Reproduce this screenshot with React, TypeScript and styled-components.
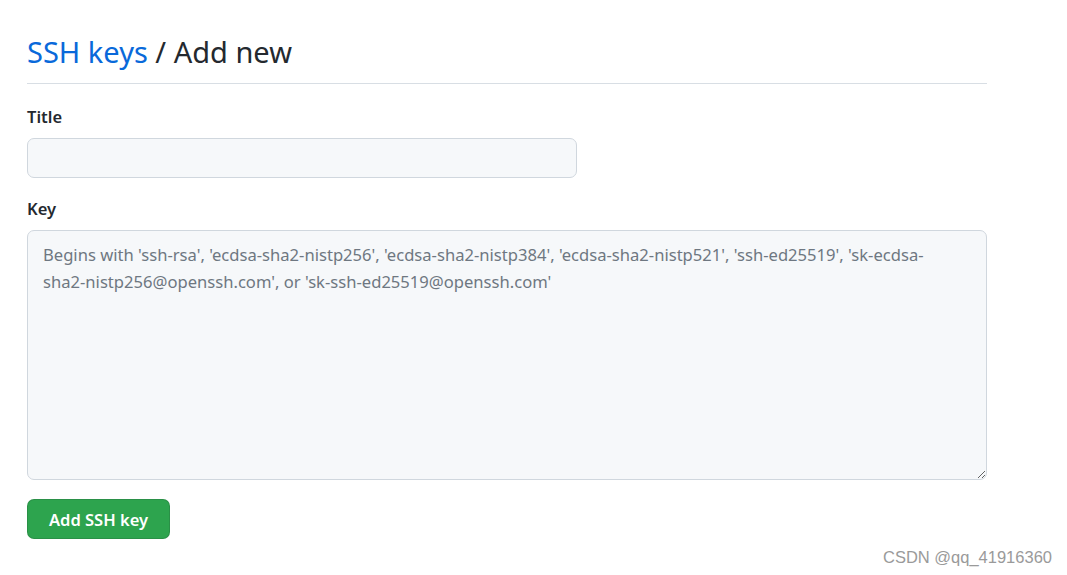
import React from "react";
import styled, { createGlobalStyle } from "styled-components";

const Global = createGlobalStyle`
  html, body { margin: 0; padding: 0; background: #ffffff; }
  body { font-family: "Noto Sans", "Open Sans", sans-serif; color: #24292f; }
`;

const Page = styled.div`
  position: relative;
  width: 1067px;
  height: 575px;
  box-sizing: border-box;
  padding: 32px 0 0 27px;
`;

const Main = styled.div`
  width: 960px;
  display: flex;
  flex-direction: column;
`;

const Header = styled.h2`
  margin: 0;
  padding-bottom: 11px;
  border-bottom: 1px solid #d8dee4;
  font-size: 29px;
  font-weight: 400;
  line-height: 40px;
  color: #24292f;
`;

const Crumb = styled.a`
  color: #0969da;
  text-decoration: none;
`;

const Field = styled.div<{ $top: number }>`
  display: flex;
  flex-direction: column;
  margin-top: ${(p) => p.$top}px;
`;

const Label = styled.label`
  font-size: 16.5px;
  font-weight: 600;
  line-height: 22px;
  margin-bottom: 10px;
`;

const TextInput = styled.input`
  width: 550px;
  height: 40px;
  box-sizing: border-box;
  background: #f6f8fa;
  border: 1px solid #d0d7de;
  border-radius: 7px;
  font-family: inherit;
  font-size: 17px;
  padding: 0 15px;
  outline: none;
`;

const TextArea = styled.textarea`
  width: 960px;
  height: 250px;
  box-sizing: border-box;
  background: #f6f8fa;
  border: 1px solid #d0d7de;
  border-radius: 7px;
  font-family: inherit;
  font-size: 16.6px;
  line-height: 27px;
  padding: 10px 26px 10px 15px;
  outline: none;
  resize: vertical;
  &::placeholder { color: #6e7781; }
`;

const Button = styled.button`
  align-self: flex-start;
  margin-top: 19px;
  height: 40px;
  padding: 0 21px 0 21px;
  background: #2da44e;
  border: 1px solid rgba(27, 31, 36, 0.15);
  border-radius: 7px;
  color: #ffffff;
  font-family: inherit;
  font-size: 16.5px;
  font-weight: 600;
  cursor: pointer;
`;

const Watermark = styled.div`
  position: absolute;
  right: 15px;
  bottom: 8px;
  font-family: "Liberation Sans", Arial, sans-serif;
  font-size: 16.5px;
  color: #9a9a9a;
`;

export default function App() {
  return (
    <Page>
      <Global />
      <Main>
        <Header>
          <Crumb href="#">SSH keys</Crumb> / Add new
        </Header>
        <Field $top={22}>
          <Label>Title</Label>
          <TextInput type="text" />
        </Field>
        <Field $top={20}>
          <Label>Key</Label>
          <TextArea placeholder="Begins with 'ssh-rsa', 'ecdsa-sha2-nistp256', 'ecdsa-sha2-nistp384', 'ecdsa-sha2-nistp521', 'ssh-ed25519', 'sk-ecdsa-sha2-nistp256@openssh.com', or 'sk-ssh-ed25519@openssh.com'" />
        </Field>
        <Button>Add SSH key</Button>
      </Main>
      <Watermark>CSDN @qq_41916360</Watermark>
    </Page>
  );
}
